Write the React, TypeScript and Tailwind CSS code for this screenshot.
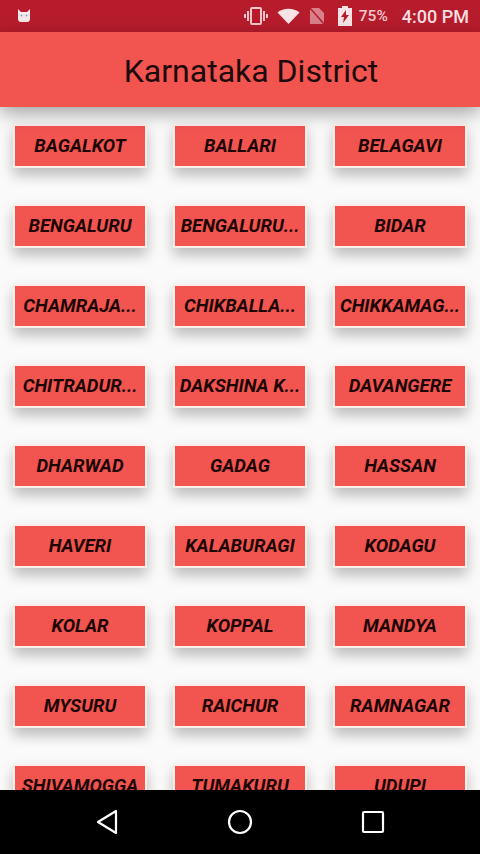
import React from 'react';

const districts = [
  'BAGALKOT', 'BALLARI', 'BELAGAVI',
  'BENGALURU', 'BENGALURU...', 'BIDAR',
  'CHAMRAJA...', 'CHIKBALLA...', 'CHIKKAMAG...',
  'CHITRADUR...', 'DAKSHINA K...', 'DAVANGERE',
  'DHARWAD', 'GADAG', 'HASSAN',
  'HAVERI', 'KALABURAGI', 'KODAGU',
  'KOLAR', 'KOPPAL', 'MANDYA',
  'MYSURU', 'RAICHUR', 'RAMNAGAR',
  'SHIVAMOGGA', 'TUMAKURU', 'UDUPI',
];

const StatusBar: React.FC = () => (
  <div className="h-8 shrink-0 bg-[#b71c2c] flex items-center justify-between pl-4 pr-[11px] text-[#f6dfe1]">
    <svg width="16" height="16" viewBox="0 0 16 16" fill="#f8e8ea">
      <path d="M2 1l3 3h6l3-3v10a3 3 0 0 1-3 3H5a3 3 0 0 1-3-3z" />
      <circle cx="5.5" cy="7.5" r="1" fill="#7fa8c0" />
      <circle cx="10.5" cy="7.5" r="1" fill="#7fa8c0" />
    </svg>
    <div className="flex items-center">
      {/* vibrate */}
      <svg width="26" height="20" viewBox="0 0 26 20" fill="none" stroke="#f0c4c8" strokeWidth="2">
        <rect x="8" y="2" width="10" height="16" rx="1" />
        <path d="M5 5v10M21 5v10M2 8v4M24 8v4" />
      </svg>
      {/* wifi */}
      <svg className="ml-[8px]" width="23" height="16" viewBox="0 0 23 16" fill="#f8e4e6">
        <path d="M0.5 4.5C6.5-0.5 16.5-0.5 22.5 4.5L11.5 16z" />
      </svg>
      {/* no sim */}
      <svg className="ml-[9px]" width="16" height="18" viewBox="0 0 16 18">
        <path d="M1 1h9l5 5v11H1z" fill="#d9808a" />
        <path d="M1 1l14 16" stroke="#b71c2c" strokeWidth="1.5" />
      </svg>
      {/* battery charging */}
      <svg className="ml-[13px]" width="14" height="20" viewBox="0 0 14 20" fill="#f8e4e6">
        <path d="M4 0h6v2h4v18H0V2h4z" />
        <path d="M8 4L3 11h3l-1 6 6-8H8z" fill="#b71c2c" />
      </svg>
      <span className="ml-[7px] mt-[1px] text-[15.5px] font-medium text-[#f3c9cd]">75%</span>
      <span className="ml-[14px] text-[18px] font-medium text-[#f6dfe1]">4:00 PM</span>
    </div>
  </div>
);

const NavBar: React.FC = () => (
  <div className="h-16 shrink-0 bg-black flex items-center justify-center gap-[107px] z-10">
    <svg width="26" height="28" viewBox="0 0 26 28" fill="none" stroke="#fff" strokeWidth="2.2" strokeLinejoin="round">
      <path d="M22 3v22L4 14z" />
    </svg>
    <svg width="26" height="28" viewBox="0 0 26 28" fill="none" stroke="#fff" strokeWidth="2.2">
      <circle cx="13" cy="14" r="11" />
    </svg>
    <svg width="26" height="28" viewBox="0 0 26 28" fill="none" stroke="#fff" strokeWidth="2.2" strokeLinejoin="round">
      <rect x="3" y="4" width="20" height="20" rx="1" />
    </svg>
  </div>
);

export default function App() {
  return (
    <div className="w-[480px] h-[854px] flex flex-col overflow-hidden bg-[#fafafa] font-['Roboto',sans-serif]">
      <StatusBar />
      <header className="h-[75px] shrink-0 bg-[#f25450] flex items-center justify-center pl-[22px] pt-[2px] shadow-[0_6px_18px_rgba(0,0,0,0.36)] z-10">
        <h1 className="text-[32px] text-[#1d0a0a]">Karnataka District</h1>
      </header>
      <main className="flex-1 min-h-0 overflow-hidden pt-[17px] px-[13px]">
        <div className="grid grid-cols-3 gap-x-[26px] gap-y-[36px]">
          {districts.map((name) => (
            <div
              key={name}
              className="h-[44px] bg-[#f25450] border-2 border-[#f9eeea] flex items-center justify-center shadow-[0_7px_14px_rgba(0,0,0,0.26)]"
            >
              <span className="whitespace-nowrap text-[18.5px] leading-none font-bold italic text-[#1c0505]">{name}</span>
            </div>
          ))}
        </div>
      </main>
      <NavBar />
    </div>
  );
}
